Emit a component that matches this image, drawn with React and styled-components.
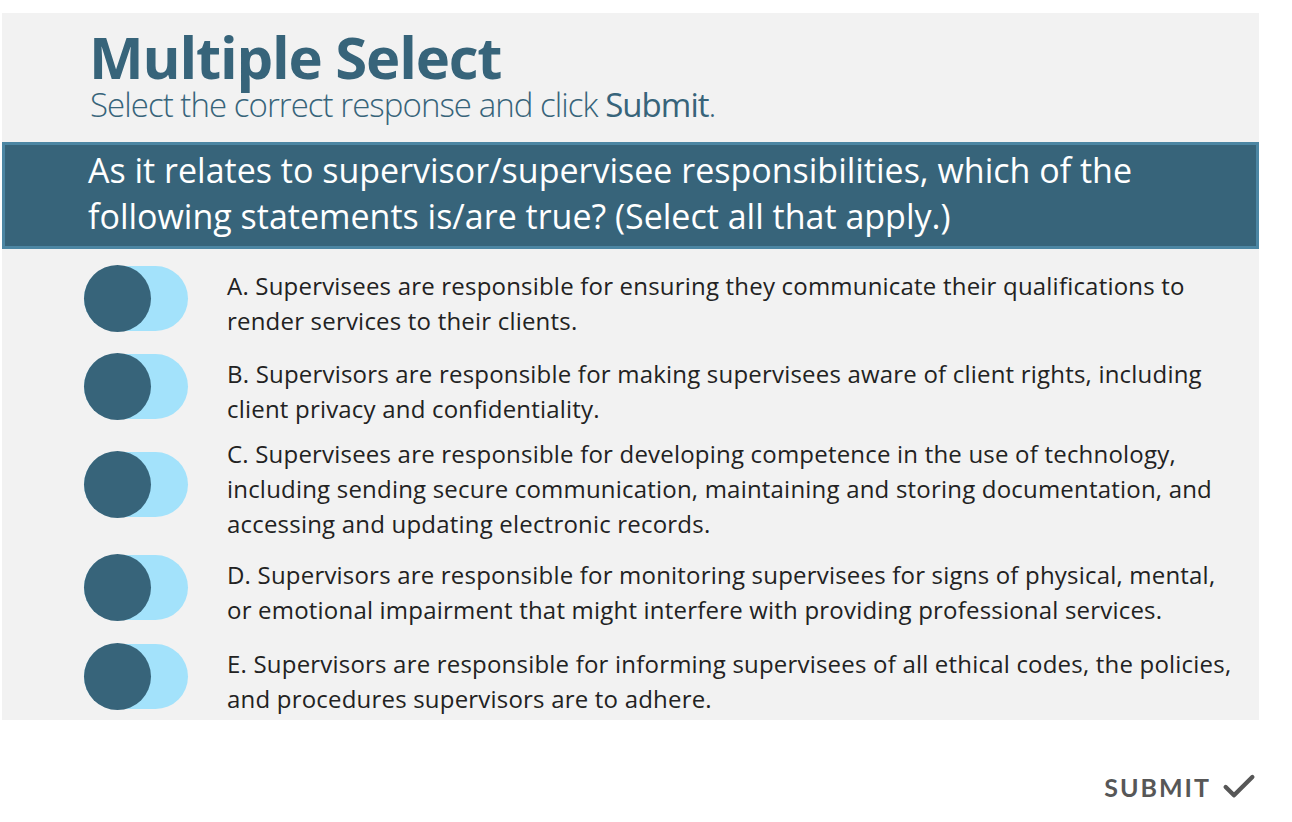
import React from 'react';
import styled, { createGlobalStyle } from 'styled-components';
import { Check } from 'lucide-react';

const GlobalStyle = createGlobalStyle`
  html, body {
    margin: 0;
    padding: 0;
    background: #ffffff;
  }
  body {
    font-family: "Open Sans", "Liberation Sans", sans-serif;
  }
`;

const Page = styled.div`
  padding: 13px 0 0 2px;
  width: 1292px;
  box-sizing: border-box;
`;

const Panel = styled.section`
  width: 1257px;
  height: 707px;
  background: #f2f2f2;
  display: flex;
  flex-direction: column;
`;

const Header = styled.header`
  padding: 14px 0 0 87px;
  height: 129px;
  box-sizing: border-box;
`;

const Title = styled.h1`
  margin: 0;
  font-family: "Open Sans", sans-serif;
  font-weight: 700;
  font-size: 58px;
  line-height: 60px;
  color: #37647a;
  letter-spacing: -1.2px;
`;

const Subtitle = styled.p`
  margin: 0 0 0 1px;
  font-family: "Open Sans", sans-serif;
  font-weight: 300;
  font-size: 33px;
  line-height: 36px;
  color: #37647a;
  letter-spacing: -0.95px;

  strong {
    font-weight: 400;
  }
`;

const Question = styled.div`
  height: 107px;
  box-sizing: border-box;
  border: 3px solid #4c86a3;
  background: #37647a;
  color: #ffffff;
  padding: 2px 0 0 83px;
  font-size: 34px;
  line-height: 46px;
  font-weight: 400;
`;

const Options = styled.div`
  display: flex;
  flex-direction: column;
  padding-left: 82px;
`;

const Row = styled.div`
  display: flex;
  align-items: center;
  gap: 39px;
  margin-top: ${(p) => p.gap}px;
  min-height: 74px;
`;

const Track = styled.div`
  flex: none;
  width: 104px;
  height: 65px;
  margin-bottom: 9px;
  border-radius: 33px;
  background: #a3e2fb;
  display: flex;
  align-items: center;
`;

const Knob = styled.div`
  width: 67px;
  height: 67px;
  border-radius: 50%;
  background: #37647a;
`;

const Label = styled.div`
  width: 1010px;
  font-size: 24px;
  line-height: 35px;
  letter-spacing: 0.2px;
  color: #222222;
`;

const Footer = styled.div`
  display: flex;
  justify-content: flex-end;
  width: 1257px;
  padding-top: 47px;
`;

const SubmitButton = styled.button`
  display: flex;
  align-items: center;
  gap: 8px;
  border: none;
  background: none;
  padding: 0;
  cursor: pointer;
  font-family: Lato, "Open Sans", sans-serif;
  font-weight: 700;
  font-size: 25px;
  letter-spacing: 2px;
  color: #575757;
`;

const options = [
  {
    gap: 17,
    text: 'A. Supervisees are responsible for ensuring they communicate their qualifications to render services to their clients.',
  },
  {
    gap: 14,
    text: 'B. Supervisors are responsible for making supervisees aware of client rights, including client privacy and confidentiality.',
  },
  {
    gap: 8,
    text: 'C. Supervisees are responsible for developing competence in the use of technology, including sending secure communication, maintaining and storing documentation, and accessing and updating electronic records.',
  },
  {
    gap: 14,
    text: 'D. Supervisors are responsible for monitoring supervisees for signs of physical, mental, or emotional impairment that might interfere with providing professional services.',
  },
  {
    gap: 15,
    text: 'E. Supervisors are responsible for informing supervisees of all ethical codes, the policies, and procedures supervisors are to adhere.',
  },
];

export default function App() {
  return (
    <Page>
      <GlobalStyle />
      <Panel>
        <Header>
          <Title>Multiple Select</Title>
          <Subtitle>
            Select the correct response and click <strong>Submit</strong>.
          </Subtitle>
        </Header>
        <Question>
          As it relates to supervisor/supervisee responsibilities, which of the
          <br />
          following statements is/are true? (Select all that apply.)
        </Question>
        <Options>
          {options.map((o) => (
            <Row key={o.text} gap={o.gap}>
              <Track>
                <Knob />
              </Track>
              <Label>{o.text}</Label>
            </Row>
          ))}
        </Options>
      </Panel>
      <Footer>
        <SubmitButton>
          SUBMIT
          <Check size={40} strokeWidth={2.6} />
        </SubmitButton>
      </Footer>
    </Page>
  );
}
